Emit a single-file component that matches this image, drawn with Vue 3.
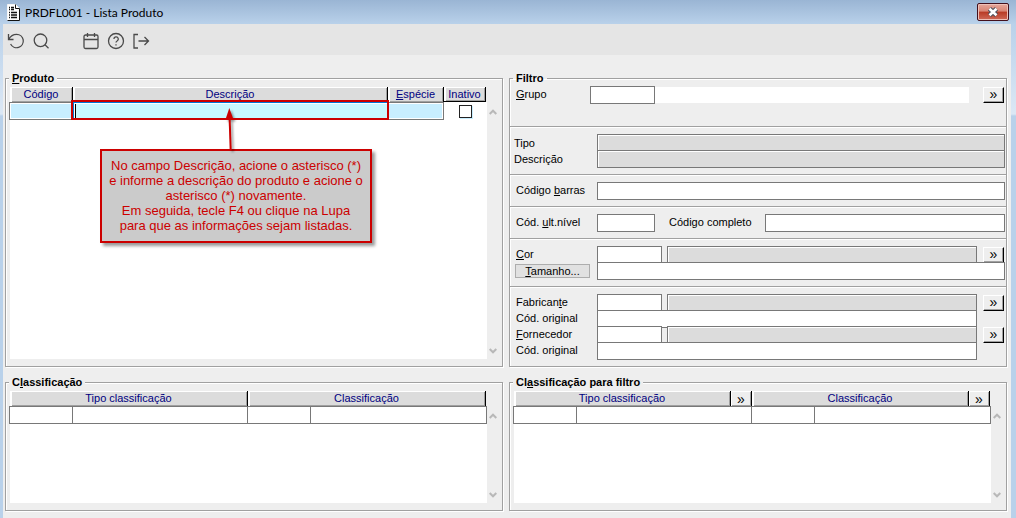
<script setup>
import { ref } from 'vue'

const inactive = ref(false)
const sideLists = [
  { id: 'cls', before: 'C', key: 'l', after: 'assificação', lookup: false },
  { id: 'flt', before: 'Cl', key: 'a', after: 'ssificação para filtro', lookup: true },
]
const partners = [
  { id: 'fab', before: 'Fabrican', key: 't', after: 'e' },
  { id: 'for', before: '', key: 'F', after: 'ornecedor' },
]
</script>

<template>
  <div class="window">
    <header class="titlebar">
      <svg class="doc" width="13" height="17" viewBox="0 0 13 17">
        <path d="M.5 .5h8l4 4v12h-12z" fill="#fff" stroke="#f4f4f4" />
        <path d="M8.500 .5v4h4v12h-12" fill="none" stroke="#111" />
        <path d="M2 3.500h1M4 3.500h3M2 5.500h1M4 5.500h3M2 8.500h1M4 8.500h6M2 11h1M4 11h6M2 13.500h1M4 13.500h6" stroke="#111" stroke-width="1.500" />
      </svg>
      <h1>PRDFL001 - Lista Produto</h1>
      <button class="close" type="button" aria-label="Fechar">
        <svg width="12" height="10" viewBox="0 0 12 10">
          <path d="M2.500 1.800l7 6.400M9.500 1.800l-7 6.400" stroke="#4b525e" stroke-width="4.600" />
          <path d="M2.500 1.800l7 6.400M9.500 1.800l-7 6.400" stroke="#fff" stroke-width="2.600" />
        </svg>
      </button>
    </header>

    <div class="client">
      <nav class="toolbar">
        <button type="button" aria-label="Desfazer">
          <svg width="18" height="18" viewBox="0 0 18 18"><path d="M1.500 2v5.500h5M1.800 7.200C3.400 4.200 6.200 2.300 9.600 2.300a6.700 6.700 0 1 1-6 9.700" /></svg>
        </button>
        <button type="button" aria-label="Pesquisar">
          <svg width="18" height="18" viewBox="0 0 18 18"><circle cx="8.500" cy="8.300" r="6.300" /><path d="M13 12.800l3.500 3.500" /></svg>
        </button>
        <button class="apart" type="button" aria-label="Calendário">
          <svg width="18" height="18" viewBox="0 0 18 18"><rect x="2" y="3" width="14" height="13.500" rx="1.500" /><path d="M2 7.500h14M5.500 1v4M12.500 1v4" /></svg>
        </button>
        <button type="button" aria-label="Ajuda">
          <svg width="18" height="18" viewBox="0 0 18 18"><circle cx="9" cy="9" r="7.500" /><path d="M6.900 7a2.200 2.200 0 1 1 3.200 2c-.8.4-1.100.8-1.100 1.600M9 12.200v1.200" /></svg>
        </button>
        <button type="button" aria-label="Sair">
          <svg width="18" height="18" viewBox="0 0 18 18"><path d="M6 2.500H2v13.500h4M6.500 9h10M12.500 5l4 4-4 4" /></svg>
        </button>
      </nav>

      <main class="panels">
        <section class="group list-group">
          <h2><u>P</u>roduto</h2>
          <div class="list">
            <div class="sheet">
              <table>
                <colgroup><col class="code" /><col /><col class="kind" /><col class="flag" /></colgroup>
                <thead>
                  <tr>
                    <th><span class="face">Código</span></th>
                    <th><span class="face">Descrição</span></th>
                    <th><span class="face"><u>E</u>spécie</span></th>
                    <th><span class="face tail sunk">Inativo</span></th>
                  </tr>
                </thead>
                <tbody>
                  <tr>
                    <td><input class="cell tint" aria-label="Código" /></td>
                    <td class="current">
                      <input class="cell active" aria-label="Descrição" />
                      <i class="caret"></i><i class="highlight"></i>
                    </td>
                    <td><input class="cell tint" aria-label="Espécie" /></td>
                    <td class="check"><input v-model="inactive" type="checkbox" aria-label="Inativo" /></td>
                  </tr>
                </tbody>
              </table>
            </div>
            <div class="scroll">
              <svg width="8" height="6" viewBox="0 0 8 6"><path d="M.7 5L4 1.700 7.300 5" /></svg>
              <svg width="8" height="6" viewBox="0 0 8 6"><path d="M.7 1L4 4.300 7.300 1" /></svg>
            </div>
          </div>
          <aside class="callout">
            <svg class="arrow" width="16" height="44" viewBox="0 0 16 44">
              <path d="M7.500 8L8.700 43" stroke="#c00" stroke-width="2" />
              <path d="M7.300 1l4.200 11.500h-8z" fill="#c00" />
            </svg>
            <p>No campo Descrição, acione o asterisco (*)<br />e informe a descrição do produto e acione o<br />asterisco (*) novamente.<br />Em seguida, tecle F4 ou clique na Lupa<br />para que as informações sejam listadas.</p>
          </aside>
        </section>

        <section class="group">
          <h2>Filtro</h2>
          <div class="block first">
            <div class="row">
              <label class="short" for="grupo"><u>G</u>rupo</label>
              <input id="grupo" class="field id" />
              <output class="plain" for="grupo"></output>
              <button class="more" type="button" aria-label="Buscar grupo">»</button>
            </div>
          </div>
          <div class="block">
            <div class="row"><label class="near" for="tipo">Tipo</label><input id="tipo" class="field grow locked" readonly /></div>
            <div class="row"><label class="near" for="desc">Descrição</label><input id="desc" class="field grow locked" readonly /></div>
          </div>
          <div class="block">
            <div class="row"><label for="barras">Código <u>b</u>arras</label><input id="barras" class="field grow" /></div>
          </div>
          <div class="block">
            <div class="row">
              <label for="nivel">Cód. <u>u</u>lt.nível</label><input id="nivel" class="field level" />
              <label class="mid" for="completo">Código completo</label><input id="completo" class="field grow" />
            </div>
          </div>
          <div class="block">
            <div class="row">
              <label for="cor"><u>C</u>or</label><input id="cor" class="field id" />
              <input class="field grow locked name" readonly aria-label="Nome da cor" />
              <button class="more" type="button" aria-label="Buscar cor">»</button>
            </div>
            <div class="row">
              <button class="size" type="button"><u>T</u>amanho...</button>
              <input class="field grow" aria-label="Tamanho" />
            </div>
          </div>
          <div class="block">
            <template v-for="p in partners" :key="p.id">
              <div class="row">
                <label :for="p.id">{{ p.before }}<u>{{ p.key }}</u>{{ p.after }}</label><input :id="p.id" class="field id" />
                <input class="field grow locked name" readonly aria-label="Nome" />
                <button class="more" type="button" aria-label="Buscar">»</button>
              </div>
              <div class="row">
                <label :for="p.id + '-orig'">Cód. original</label><input :id="p.id + '-orig'" class="field grow inset" />
              </div>
            </template>
          </div>
        </section>

        <section v-for="s in sideLists" :key="s.id" class="group list-group">
          <h2>{{ s.before }}<u>{{ s.key }}</u>{{ s.after }}</h2>
          <div class="list">
            <div class="sheet">
              <table>
                <colgroup><col class="code" /><col class="type" /><col class="code2" /><col /></colgroup>
                <thead>
                  <tr>
                    <th colspan="2">
                      <div class="head"><span class="face">Tipo classificação</span><button v-if="s.lookup" class="mini" type="button" aria-label="Buscar tipo">»</button></div>
                    </th>
                    <th colspan="2">
                      <div class="head tail"><span class="face">Classificação</span><button v-if="s.lookup" class="mini" type="button" aria-label="Buscar classificação">»</button></div>
                    </th>
                  </tr>
                </thead>
                <tbody>
                  <tr>
                    <td v-for="n in 4" :key="n"><input class="cell" :aria-label="'Coluna ' + n" /></td>
                  </tr>
                </tbody>
              </table>
            </div>
            <div class="scroll">
              <svg width="8" height="6" viewBox="0 0 8 6"><path d="M.7 5L4 1.700 7.300 5" /></svg>
              <svg width="8" height="6" viewBox="0 0 8 6"><path d="M.7 1L4 4.300 7.300 1" /></svg>
            </div>
          </div>
        </section>
      </main>
    </div>
  </div>
</template>

<style>
body { margin: 0; }
</style>

<style scoped>
* { box-sizing: border-box; }
.window {
  min-height: 100vh;
  display: flex;
  flex-direction: column;
  padding: 0 5px 0 3px;
  background: linear-gradient(#9ab5d4 0, #b9d1ea 24px, #dce8f5 114px, #b9d1ea 116px);
  font: 11px/13px "Liberation Sans", Arial, sans-serif;
  color: #000;
}
button, input { font: inherit; margin: 0; padding: 0; border-radius: 0; color: #000; }
.titlebar { height: 24px; display: flex; align-items: center; padding: 0 2px 0 4px; }
.doc { margin-right: 5px; }
h1 { flex: 1; margin: 0; padding-top: 1px; font: 12px/16px Lato, "Open Sans", sans-serif; }
.close {
  width: 32px;
  height: 18px;
  display: grid;
  place-items: center;
  border: 1px solid #43101c;
  border-radius: 2px;
  background: linear-gradient(#e6a79b 0, #d88474 45%, #b83a24 50%, #cf6a58 100%);
  box-shadow: inset 0 0 0 1px #eec0b8;
}
.client { flex: 1; display: flex; flex-direction: column; background: #eee; }
.toolbar { flex: none; height: 31px; display: flex; align-items: center; padding-top: 3px; background: #e5e5e5; }
.toolbar button { width: 25px; height: 24px; display: grid; place-items: center; border: 0; background: none; }
.toolbar .apart { margin-left: 25px; }
.toolbar svg { fill: none; stroke: #4a4a4a; stroke-width: 1.3; }

.panels {
  flex: 1;
  display: grid;
  grid-template-columns: minmax(0, 1fr) minmax(0, 1fr);
  grid-template-rows: auto 1fr;
  gap: 15px 6px;
  padding: 23px 4px 7px 2px;
}
.group {
  position: relative;
  border: 1px solid #a0a0a0;
  box-shadow: 1px 1px #fff, inset 1px 1px #fff;
}
h2 {
  width: max-content;
  margin: -7px 0 -6px 3px;
  padding: 0 3px;
  background: #eee;
  font: bold 11px/13px "Liberation Sans", Arial, sans-serif;
}
.list-group { display: flex; flex-direction: column; }
.list { flex: 1; display: flex; padding: 8px 3px 7px; }
.sheet {
  flex: 1;
  min-width: 0;
  border-left: 1px solid #eee;
  background: #fff;
}
table { width: calc(100% + 1px); margin-left: -1px; table-layout: fixed; border-spacing: 0; }
.code { width: 64px; }
.code2 { width: 63px; }
.type { width: 36.6%; }
.kind { width: 56px; }
.flag { width: 43px; }
th { height: 15px; padding: 0; font-weight: normal; color: #000080; background: #eee; }
th:first-child { padding-left: 1px; }
.head { display: flex; }
.face {
  flex: 1;
  display: block;
  height: 15px;
  line-height: 15px;
  text-align: center;
  background: #dcdcdc;
  border-right: 1px solid #000;
  box-shadow: inset 2px 1px #fff, inset -1px -1px #a0a0a0;
}
.tail { margin-right: 1px; }
.sunk { border-bottom: 1px solid #000; }
.mini {
  width: 21px;
  height: 15px;
  border: 0;
  border-right: 1px solid #000;
  background: #eee;
  box-shadow: inset 1px 1px #fff, inset -1px -1px #a0a0a0;
  font-size: 14px;
  line-height: 12px;
}
td { height: 18px; padding: 0; border: solid #787878; border-width: 1px 1px 1px 0; }
td:first-child { border-left-width: 1px; }
.cell { display: block; width: 100%; height: 16px; border: 0; outline: 0; background: #fff; }
.tint { border: 1px solid #fff; background: #c8eeff; }
.current { position: relative; border-top-color: #0078d7; }
.active { border-left: 1px solid #0078d7; background: #c8f8ff; box-shadow: inset 1px 1px #fff; }
.caret { position: absolute; left: 2px; top: 1px; bottom: 1px; width: 1px; background: #000; }
.highlight { position: absolute; inset: -3px -2px -1px -2px; border: 2px solid #c00; z-index: 1; pointer-events: none; }
.check { border: 0; text-align: center; }
.check input {
  appearance: none;
  display: block;
  width: 13px;
  height: 13px;
  margin: 0 auto;
  border: 1px solid #222;
  background: #fff;
  box-shadow: 1px 1px #c8eeff;
}
.scroll {
  width: 12px;
  display: flex;
  flex-direction: column;
  align-items: center;
  justify-content: space-between;
  padding: 22px 1px 5px 0;
}
.scroll svg { fill: none; stroke: #b8b8b8; stroke-width: 2; }

.callout {
  position: absolute;
  left: 94px;
  top: 70px;
  width: 272px;
  padding: 7px 0 8px;
  border: 2px solid #c00;
  background: #cbcbcb;
  box-shadow: 3px 3px 3px rgba(0, 0, 0, 0.4);
  color: #c00;
  text-align: center;
  font-size: 13px;
  line-height: 15px;
}
.callout p { margin: 0; white-space: nowrap; }
.arrow { position: absolute; left: 120px; top: -44px; filter: drop-shadow(2px 2px 1px rgba(0, 0, 0, 0.4)); }

.block { padding: 7px 1px 8px 0; border-top: 1px solid #a0a0a0; box-shadow: inset 1px 1px #fff; }
.first { border-top: 0; padding-bottom: 24px; }
.row { height: 16px; display: flex; align-items: flex-start; }
label { flex: none; width: 87px; padding-left: 6px; line-height: 16px; white-space: nowrap; }
.short { width: 80px; }
.near { padding-left: 4px; line-height: 18px; }
.mid { width: 110px; padding-left: 14px; }
.field { flex: none; height: 18px; border: 1px solid #787878; background: #fff; outline: 0; }
.row .grow { flex: 1; min-width: 0; }
.id { width: 65px; }
.level { width: 58px; }
.locked { background: #dcdcdc; box-shadow: inset 1px 1px #fff; }
.name { margin-left: 5px; }
.inset { margin-right: 28px; }
.plain { flex: 1; height: 16px; margin: 1px 8px 0 0; background: #fff; }
.more {
  flex: none;
  width: 21px;
  height: 16px;
  margin: 1px 1px 0 6px;
  border: solid;
  border-width: 1px;
  border-color: #fff #000 #000 #fff;
  background: #eee;
  box-shadow: inset -1px -1px #a0a0a0;
  font-size: 14px;
  line-height: 10px;
  padding-bottom: 2px;
}
.size {
  flex: none;
  width: 75px;
  height: 14px;
  margin: 2px 7px 0 5px;
  border: 1px solid #adadad;
  background: #e1e1e1;
  line-height: 12px;
}
</style>
